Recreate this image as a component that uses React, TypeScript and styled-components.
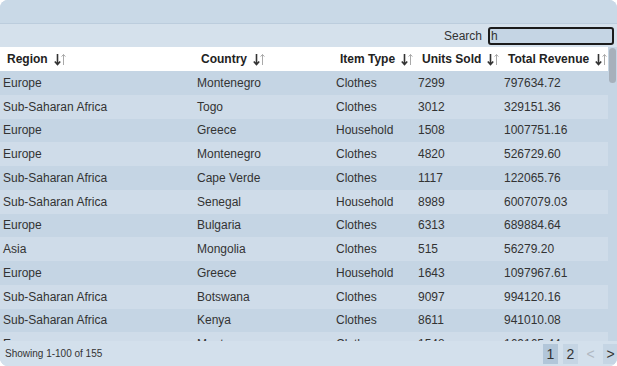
import styled, { createGlobalStyle } from 'styled-components'

const GlobalStyle = createGlobalStyle`
  html, body {
    margin: 0;
    padding: 0;
    background: #ffffff;
    font-family: "Liberation Sans", Arial, sans-serif;
  }
`

const colors = {
  topBar: '#c9d9e7',
  searchBar: '#d5e1ec',
  rowOdd: '#c5d5e4',
  rowEven: '#cfdce9',
  footer: '#d3e0ec',
  text: '#333333',
  heading: '#222222',
  pageActive: '#b2c6d9',
  page: '#c5d5e4',
}

const COLUMNS = '194px 139px 82px 86px 1fr'

const Frame = styled.div`
  width: 617px;
  height: 366px;
  display: flex;
  flex-direction: column;
  border-radius: 8px;
  overflow: hidden;
  background: ${colors.rowOdd};
`

const TopBar = styled.div`
  height: 23px;
  flex: none;
  background: ${colors.topBar};
  border-bottom: 1px solid #bccddd;
`

const SearchBar = styled.div`
  height: 23px;
  flex: none;
  display: flex;
  align-items: center;
  justify-content: flex-end;
  gap: 6px;
  padding-right: 3px;
  background: ${colors.searchBar};
  font-size: 12px;
  color: ${colors.text};
`

const SearchInput = styled.input`
  width: 126px;
  height: 18px;
  box-sizing: border-box;
  border: 2px solid #1b1b1b;
  border-radius: 3px;
  background: ${colors.rowOdd};
  font-family: inherit;
  font-size: 12px;
  color: ${colors.text};
  padding: 0 1px;
  outline: none;
`

const Body = styled.div`
  flex: 1;
  min-height: 0;
  display: flex;
  background: ${colors.rowOdd};
`

const TableArea = styled.div`
  flex: 1;
  min-width: 0;
  overflow: hidden;
`

const ScrollTrack = styled.div`
  width: 9px;
  flex: none;
  padding: 1px 1px 0 1px;
  box-sizing: border-box;
`

const ScrollThumb = styled.div`
  height: 35px;
  width: 7px;
  border-radius: 4px;
  background: #a6b0bb;
`

const HeaderRow = styled.div`
  display: grid;
  grid-template-columns: ${COLUMNS};
  height: 24px;
  align-items: center;
  background: #ffffff;
`

const HeaderCell = styled.div`
  padding-left: 7px;
  font-size: 12px;
  font-weight: 700;
  color: ${colors.heading};
  white-space: nowrap;
  display: flex;
  align-items: center;
  gap: 6px;
`

const Row = styled.div<{ $even: boolean }>`
  display: grid;
  grid-template-columns: ${COLUMNS};
  height: 23.75px;
  align-items: center;
  background: ${({ $even }) => ($even ? colors.rowEven : colors.rowOdd)};
`

const Cell = styled.div`
  padding-left: 3px;
  font-size: 12px;
  color: ${colors.text};
  white-space: nowrap;
`

const Footer = styled.div`
  height: 25px;
  flex: none;
  display: flex;
  align-items: center;
  justify-content: space-between;
  background: ${colors.footer};
  padding-left: 5px;
`

const Summary = styled.span`
  font-size: 10px;
  color: ${colors.text};
`

const Pager = styled.div`
  display: flex;
  align-items: center;
  gap: 5px;
  margin-right: -1px;
`

const PageButton = styled.button<{ $active?: boolean; $disabled?: boolean }>`
  height: 20px;
  width: 15px;
  padding: 0;
  border: none;
  font-family: inherit;
  font-size: 14px;
  color: ${({ $disabled }) => ($disabled ? '#b0b8c2' : colors.text)};
  background: ${({ $active, $disabled }) =>
    $disabled ? 'transparent' : $active ? colors.pageActive : colors.page};
`

function SortIcon() {
  return (
    <svg width="13" height="13" viewBox="0 0 13 13" fill="none">
      <path d="M3.5 1v10.5M0.8 8.5l2.7 3 2.7-3" stroke="#333" strokeWidth="1.6" />
      <path d="M9.5 12V1.5M7.6 3.6l1.9-2.1 1.9 2.1" stroke="#a9a9a9" strokeWidth="1" />
    </svg>
  )
}

const HEADERS = ['Region', 'Country', 'Item Type', 'Units Sold', 'Total Revenue']

const ROWS = [
  ['Europe', 'Montenegro', 'Clothes', '7299', '797634.72'],
  ['Sub-Saharan Africa', 'Togo', 'Clothes', '3012', '329151.36'],
  ['Europe', 'Greece', 'Household', '1508', '1007751.16'],
  ['Europe', 'Montenegro', 'Clothes', '4820', '526729.60'],
  ['Sub-Saharan Africa', 'Cape Verde', 'Clothes', '1117', '122065.76'],
  ['Sub-Saharan Africa', 'Senegal', 'Household', '8989', '6007079.03'],
  ['Europe', 'Bulgaria', 'Clothes', '6313', '689884.64'],
  ['Asia', 'Mongolia', 'Clothes', '515', '56279.20'],
  ['Europe', 'Greece', 'Household', '1643', '1097967.61'],
  ['Sub-Saharan Africa', 'Botswana', 'Clothes', '9097', '994120.16'],
  ['Sub-Saharan Africa', 'Kenya', 'Clothes', '8611', '941010.08'],
  ['Europe', 'Montenegro', 'Clothes', '1548', '169165.44'],
]

function App() {
  return (
    <>
      <GlobalStyle />
      <Frame>
        <TopBar />
        <SearchBar>
          <label htmlFor="search">Search</label>
          <SearchInput id="search" defaultValue="h" autoFocus />
        </SearchBar>
        <Body>
          <TableArea>
            <HeaderRow>
              {HEADERS.map((h) => (
                <HeaderCell key={h}>
                  {h}
                  <SortIcon />
                </HeaderCell>
              ))}
            </HeaderRow>
            {ROWS.map((row, i) => (
              <Row key={i} $even={i % 2 === 1}>
                {row.map((value, j) => (
                  <Cell key={j}>{value}</Cell>
                ))}
              </Row>
            ))}
          </TableArea>
          <ScrollTrack>
            <ScrollThumb />
          </ScrollTrack>
        </Body>
        <Footer>
          <Summary>Showing 1-100 of 155</Summary>
          <Pager>
            <PageButton $active>1</PageButton>
            <PageButton>2</PageButton>
            <PageButton $disabled>&lt;</PageButton>
            <PageButton>&gt;</PageButton>
          </Pager>
        </Footer>
      </Frame>
    </>
  )
}

export default App
